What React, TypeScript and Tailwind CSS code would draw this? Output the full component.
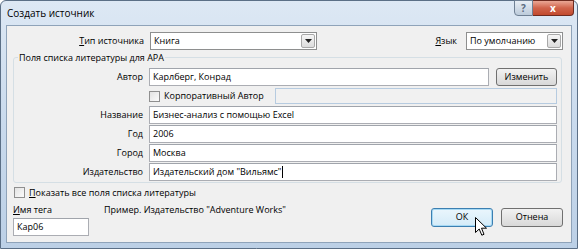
import React from "react";

const font = { fontFamily: '"Open Sans", "Noto Sans", Arial, sans-serif' };

function Input({ value, className = "", caret = false }: { value?: string; className?: string; caret?: boolean }) {
  return (
    <div
      className={`flex h-[18px] items-center border border-[#abadb3] border-t-[#a0a4ab] bg-white px-[3px] text-[9px] text-black ${className}`}
    >
      <span className="whitespace-nowrap">{value}</span>
      {caret && <span className="ml-[1px] h-[12px] w-[1px] bg-black" />}
    </div>
  );
}

function Combo({ value, className = "" }: { value: string; className?: string }) {
  return (
    <div className={`flex h-[18px] items-center border border-[#8e8f8f] bg-white pl-[3px] pr-[1px] text-[9px] ${className}`}>
      <span className="flex-1 whitespace-nowrap">{value}</span>
      <div className="flex h-[14px] w-[14px] items-center justify-center rounded-[2px] border border-[#a8a8a8] bg-gradient-to-b from-[#f6f6f6] to-[#dcdcdc]">
        <svg width="7" height="4" viewBox="0 0 7 4">
          <path d="M0 0 L7 0 L3.5 4 Z" fill="#222" />
        </svg>
      </div>
    </div>
  );
}

function Check({ label, u }: { label: string; u?: string }) {
  return (
    <div className="flex items-center gap-[4px] text-[9px]">
      <div className="h-[11px] w-[11px] border border-[#8f8f8f] bg-gradient-to-br from-[#e3e3e3] to-[#fbfbfb]" />
      <span className="whitespace-nowrap">
        {u && <span className="underline">{u}</span>}
        {label}
      </span>
    </div>
  );
}

function Row({ label, children }: { label: string; children: React.ReactNode }) {
  return (
    <div className="flex h-[18px] items-center">
      <div className="w-[135px] pr-[6px] text-right text-[9px] whitespace-nowrap">{label}</div>
      <div className="flex flex-1 items-center">{children}</div>
    </div>
  );
}

export default function App() {
  return (
    <div style={font} className="relative h-[249px] w-[578px] overflow-hidden bg-white text-black">
      <div className="flex h-[249px] w-[578px] flex-col rounded-t-[6px] border border-[#5b6f86] bg-gradient-to-b from-[#dde8f4] via-[#c9daed] to-[#bcd0e6]">
        {/* Title bar */}
        <div className="relative flex h-[24px] items-center pl-[6px] text-[10px]">
          <span>Создать источник</span>
          <div className="absolute right-[3px] top-[-1px] flex">
            <div className="flex h-[16px] w-[19px] items-center justify-center rounded-bl-[4px] border border-[#6f8094] bg-gradient-to-b from-[#e7edf4] to-[#bccbdb] text-[10px] font-bold text-[#5a6b7f]">
              ?
            </div>
            <div className="flex h-[16px] w-[41px] items-center justify-center rounded-br-[4px] border border-l-0 border-[#6d2a1f] bg-gradient-to-b from-[#e9a795] via-[#d0634b] to-[#c24a2d] text-[10px] font-bold text-white">
              x
            </div>
          </div>
        </div>

        {/* Client area */}
        <div className="mx-[5px] mb-[5px] flex flex-1 flex-col border border-[#8fa3b9] bg-[#f0f0f0] pr-[8px] pl-[6px] pt-[6px]">
          <div className="flex h-[18px] items-center text-[9px]">
            <div className="w-[137px] pr-[6px] text-right">
              <span className="underline">Т</span>ип источника
            </div>
            <Combo value="Книга" className="w-[167px]" />
            <div className="flex-1" />
            <div className="pr-[9px]">
              <span className="underline">Я</span>зык
            </div>
            <Combo value="По умолчанию" className="w-[97px]" />
          </div>

          <fieldset className="mt-[1px] mr-[1px] rounded-[3px] border border-[#d5dfe5] pr-[4px] pb-[1px]">
            <legend className="ml-[4px] px-[1px] text-[9px] leading-[13px]">Поля списка литературы для APA</legend>
            <div className="mt-[4px] flex flex-col gap-[1px]">
              <Row label="Автор">
                <Input value="Карлберг, Конрад" className="flex-1" />
                <button className="ml-[7px] h-[18px] w-[61px] rounded-[3px] border border-[#707070] bg-gradient-to-b from-[#f2f2f2] to-[#d8d8d8] text-[9px]">
                  Изменить
                </button>
              </Row>
              <Row label="">
                <Check label="Корпоративный Автор" />
                <div className="ml-[11px] h-[16px] flex-1 border border-[#b6cbe0] bg-[#f1f1f1]" />
              </Row>
              <Row label="Название">
                <Input value="Бизнес-анализ с помощью Excel" className="flex-1" />
              </Row>
              <Row label="Год">
                <Input value="2006" className="flex-1" />
              </Row>
              <Row label="Город">
                <Input value="Москва" className="flex-1" />
              </Row>
              <Row label="Издательство">
                <Input value={'Издательский дом "Вильямс"'} caret className="flex-1" />
              </Row>
            </div>
          </fieldset>

          <div className="mt-[3px] ml-[1px]">
            <Check u="П" label="оказать все поля списка литературы" />
          </div>
          <div className="mt-[3px] flex items-start">
            <div className="flex w-[91px] flex-col">
              <div className="text-[9px] leading-[14px]">
                <span className="underline">И</span>мя тега
              </div>
              <Input value="Кар06" className="mt-[1px] w-[76px]" />
            </div>
            <div className="text-[9px] leading-[14px]">Пример. Издательство "Adventure Works"</div>
            <div className="flex-1" />
            <div className="mt-[5px] flex gap-[8px]">
              <button className="h-[19px] w-[62px] rounded-[3px] border border-[#3c7fb1] bg-gradient-to-b from-[#eaf6fd] to-[#d4ebf8] text-[9px] shadow-[inset_0_0_0_1px_#a6d9f4]">
                ОК
              </button>
              <button className="h-[19px] w-[62px] rounded-[3px] border border-[#707070] bg-gradient-to-b from-[#f2f2f2] to-[#d8d8d8] text-[9px]">
                Отнена
              </button>
            </div>
          </div>
        </div>
      </div>

      {/* Mouse pointer over OK */}
      <svg className="absolute left-[475px] top-[217px]" width="13" height="20" viewBox="0 0 13 20">
        <path
          d="M0.5 0.5 L0.5 15.5 L4.2 12 L6.8 18.2 L9 17.3 L6.5 11.2 L11.5 11.2 Z"
          fill="white"
          stroke="black"
          strokeWidth="1"
          strokeLinejoin="round"
        />
      </svg>
    </div>
  );
}
